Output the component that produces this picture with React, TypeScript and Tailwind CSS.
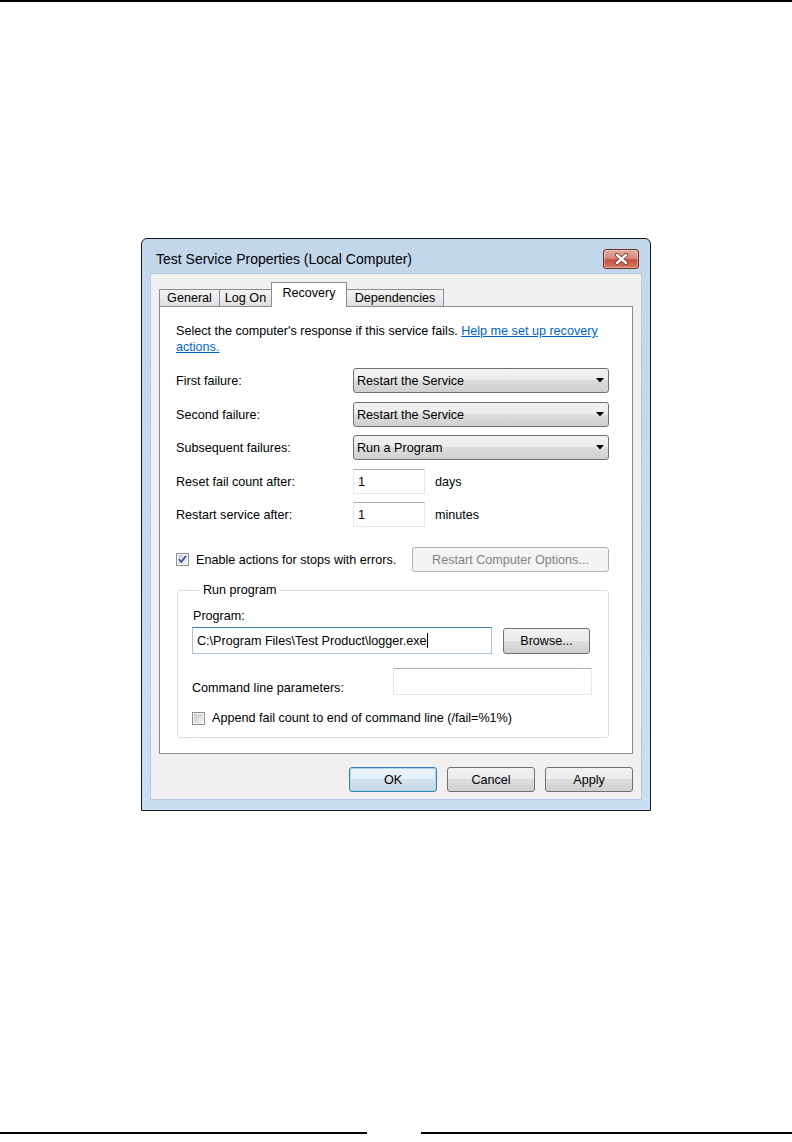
import React from "react";

function CloseButton() {
  return (
    <div className="mt-[10px] flex h-[20px] w-[36px] items-center justify-center rounded-[3px] border border-[#6e3128] bg-[linear-gradient(#e6aa9e_0%,#d98c7d_45%,#c6503f_55%,#d57a62_100%)] shadow-[inset_0_0_0_1px_rgba(255,255,255,0.35)]">
      <svg width="15" height="12" viewBox="0 0 15 12">
        <path d="M3 2 L12 10 M12 2 L3 10" stroke="#7b3a31" strokeWidth="4.2" strokeLinecap="round" />
        <path d="M3 2 L12 10 M12 2 L3 10" stroke="#ffffff" strokeWidth="2.4" strokeLinecap="round" />
      </svg>
    </div>
  );
}

function Tab({ label, className }: { label: string; className: string }) {
  return (
    <div
      className={
        "flex h-[18px] items-center justify-center border border-[#898c95] bg-[linear-gradient(#f3f3f3_0%,#ebebeb_50%,#dedede_100%)] " +
        className
      }
    >
      {label}
    </div>
  );
}

function Combo({ value }: { value: string }) {
  return (
    <div className="flex h-[25px] w-[256px] items-center justify-between rounded-[3px] border border-[#707070] bg-[linear-gradient(#f2f2f2_0%,#ebebeb_50%,#dddddd_50%,#cfcfcf_100%)] pl-[3px] pr-[4px]">
      <span>{value}</span>
      <svg width="8" height="5" viewBox="0 0 8 5">
        <path d="M0 0 H8 L4 4.5 Z" fill="#000" />
      </svg>
    </div>
  );
}

function TextBox({ value, className }: { value: string; className: string }) {
  return (
    <div
      className={
        "flex h-[25px] items-center border border-[#e3e9ef] border-t-[#abadb3] bg-white pl-[4px] " +
        className
      }
    >
      {value}
    </div>
  );
}

function CheckedBox() {
  return (
    <svg width="13" height="13" viewBox="0 0 13 13" className="shrink-0">
      <defs>
        <linearGradient id="cbg" x1="0" y1="0" x2="1" y2="1">
          <stop offset="0" stopColor="#cbcfd5" />
          <stop offset="1" stopColor="#f6f6f6" />
        </linearGradient>
      </defs>
      <rect x="0.5" y="0.5" width="12" height="12" fill="#f4f4f4" stroke="#8e8f8f" />
      <rect x="2" y="2" width="9" height="9" fill="url(#cbg)" />
      <path d="M3 6.3 L5.3 9 L10 3" stroke="#2b4a9b" strokeWidth="1.7" fill="none" />
    </svg>
  );
}

function EmptyBox() {
  return (
    <svg width="13" height="13" viewBox="0 0 13 13" className="shrink-0">
      <defs>
        <linearGradient id="ebg" x1="0" y1="0" x2="1" y2="1">
          <stop offset="0" stopColor="#c9c9c9" />
          <stop offset="1" stopColor="#f4f4f4" />
        </linearGradient>
      </defs>
      <rect x="0.5" y="0.5" width="12" height="12" fill="#f4f4f4" stroke="#8e8f8f" />
      <rect x="2" y="2" width="9" height="9" fill="url(#ebg)" />
    </svg>
  );
}

function Btn({ label, primary, className }: { label: string; primary?: boolean; className?: string }) {
  return (
    <div
      className={
        "flex h-[25px] w-[88px] shrink-0 items-center justify-center rounded-[3px] border " +
        (primary
          ? "border-[#3c7fb1] bg-[linear-gradient(#eef5fb_0%,#e3edf5_50%,#d3e1ec_50%,#c9d9e6_100%)] shadow-[inset_0_0_0_1px_#a9d8f3] "
          : "border-[#707070] bg-[linear-gradient(#f2f2f2_0%,#ebebeb_50%,#dddddd_50%,#cfcfcf_100%)] ") +
        (className ?? "")
      }
    >
      {label}
    </div>
  );
}

export default function App() {
  return (
    <div className="flex h-[1142px] w-[792px] flex-col bg-white font-['Liberation_Sans',Arial,sans-serif] text-[12.6px] leading-[16px] text-black">
      <div className="h-[2px] w-full bg-black" />

      <div className="ml-[141px] mt-[236px] flex h-[573px] w-[510px] flex-col rounded-t-[6px] border border-[#1b1b1b] bg-linear-to-b from-[#c2d6ec] to-[#cadff3]">
        {/* Title bar */}
        <div className="flex h-[34px] items-start justify-between pl-[14px] pr-[11px]">
          <span className="mt-[11px] text-[14px] leading-[18px]">Test Service Properties (Local Computer)</span>
          <CloseButton />
        </div>

        {/* Client area */}
        <div className="mx-[8px] flex h-[527px] flex-col border border-[#b7c8db] bg-[#f0f0f0] px-[8px] pt-[8px]">
          {/* Tabs */}
          <div className="relative z-10 -mb-px flex h-[25px] items-end">
            <Tab label="General" className="w-[61px]" />
            <Tab label="Log On" className="-ml-px w-[53px]" />
            <div className="relative z-10 -ml-px flex h-[25px] w-[76px] justify-center border border-b-0 border-[#898c95] bg-white pt-[2px]">
              Recovery
            </div>
            <Tab label="Dependencies" className="-ml-px w-[98px]" />
          </div>

          {/* Panel */}
          <div className="flex h-[448px] flex-col border border-[#898c95] bg-white pl-[16px] pt-[16px]">
            <div className="w-[433px] whitespace-nowrap">
              Select the computer's response if this service fails.{" "}
              <a className="text-[#0066cc] underline">
                Help me set up recovery
                <br />
                actions.
              </a>
            </div>

            <div className="mt-[13px] flex w-[433px] items-center">
              <span className="w-[177px]">First failure:</span>
              <Combo value="Restart the Service" />
            </div>
            <div className="mt-[9px] flex w-[433px] items-center">
              <span className="w-[177px]">Second failure:</span>
              <Combo value="Restart the Service" />
            </div>
            <div className="mt-[8px] flex w-[433px] items-center">
              <span className="w-[177px]">Subsequent failures:</span>
              <Combo value="Run a Program" />
            </div>
            <div className="mt-[9px] flex w-[433px] items-center">
              <span className="w-[177px]">Reset fail count after:</span>
              <TextBox value="1" className="w-[72px]" />
              <span className="ml-[10px]">days</span>
            </div>
            <div className="mt-[8px] flex w-[433px] items-center">
              <span className="w-[177px]">Restart service after:</span>
              <TextBox value="1" className="w-[72px]" />
              <span className="ml-[10px]">minutes</span>
            </div>

            <div className="mt-[20px] flex w-[433px] items-center">
              <CheckedBox />
              <span className="ml-[7px]">Enable actions for stops with errors.</span>
              <div className="ml-auto flex h-[25px] w-[197px] items-center justify-center rounded-[3px] border border-[#adb2b5] bg-[#f4f4f4] text-[#838383]">
                Restart Computer Options...
              </div>
            </div>

            <fieldset className="ml-px mt-[10px] w-[432px] rounded-[3px] border border-[#d5dfe5] pb-[11px] pl-[14px]">
              <legend className="ml-[8px] px-[3px]">Run program</legend>
              <div className="mt-[10px] pl-px">Program:</div>
              <div className="mt-[3px] flex items-center">
                <div className="flex h-[27px] w-[300px] items-center border border-[#a4c3e0] border-t-[#3d7bad] bg-white pl-[4px]">
                  <span>C:\Program Files\Test Product\logger.exe</span>
                  <span className="h-[15px] w-px bg-black" />
                </div>
                <Btn label="Browse..." className="ml-[11px] !h-[26px] !w-[87px]" />
              </div>
              <div className="mt-[14px] flex items-start">
                <span className="mt-[12px] w-[201px]">Command line parameters:</span>
                <div className="h-[27px] w-[199px] border border-[#e3e9ef] border-t-[#abadb3] bg-white" />
              </div>
              <div className="mt-[14px] flex h-[16px] items-center">
                <EmptyBox />
                <span className="ml-[7px]">Append fail count to end of command line (/fail=%1%)</span>
              </div>
            </fieldset>
          </div>

          {/* Buttons */}
          <div className="mt-[13px] flex justify-end gap-[10px]">
            <Btn label="OK" primary />
            <Btn label="Cancel" />
            <Btn label="Apply" />
          </div>
        </div>
      </div>

      <div className="mb-[8px] mt-auto flex h-[2px] justify-between">
        <div className="w-[367px] bg-black" />
        <div className="w-[371px] bg-black" />
      </div>
    </div>
  );
}
